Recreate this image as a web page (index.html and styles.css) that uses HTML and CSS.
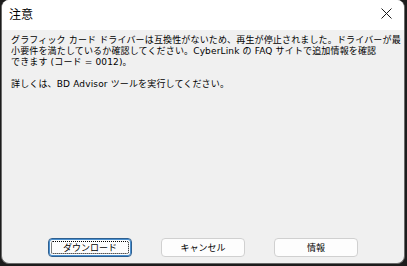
FILE: index.html
```html
<!DOCTYPE html>
<html lang="ja">
<head>
<meta charset="utf-8">
<link rel="stylesheet" href="styles.css">
</head>
<body>
<div class="window">
  <div class="titlebar">
    <span class="title">注意</span>
    <span class="close">
      <svg width="11" height="11" viewBox="0 0 11 11"><path d="M0.5 0.5 L10.5 10.5 M10.5 0.5 L0.5 10.5" stroke="#1a1a1a" stroke-width="1"/></svg>
    </span>
  </div>
  <div class="content">
    <p class="msg"><span class="line">グラフィック カード ドライバーは互換性がないため、再生が停止されました。ドライバーが最</span><span class="line">小要件を満たしているか確認してください。CyberLink の FAQ サイトで追加情報を確認</span><span class="line">できます (コード = 0012)。</span></p>
    <p class="msg"><span class="line">詳しくは、BD Advisor ツールを実行してください。</span></p>
  </div>
  <div class="buttons">
    <button class="btn default"><span class="focus">ダウンロード</span></button>
    <button class="btn">キャンセル</button>
    <button class="btn">情報</button>
  </div>
</div>
</body>
</html>
```
FILE: styles.css
```css
html, body {
  margin: 0;
  padding: 0;
  background: #1c1c1c;
  width: 407px;
  height: 266px;
  overflow: hidden;
}
body {
  padding: 0 2px 2px 1px;
  box-sizing: border-box;
  font-family: "Noto Sans CJK JP", "Noto Sans", sans-serif;
  color: #000;
}
.window {
  width: 404px;
  height: 264px;
  background: #f0f0f0;
  border-radius: 8px;
  overflow: hidden;
  display: flex;
  flex-direction: column;
  box-sizing: border-box;
  border: 1px solid #6a6a6a;
  border-top: none;
}
.titlebar {
  height: 30px;
  background: #ffffff;
  display: flex;
  align-items: center;
  justify-content: space-between;
  padding: 0 12px 2px 7px;
  box-sizing: border-box;
  flex: none;
}
.title {
  font-size: 12px;
  line-height: 14px;
}
.close {
  display: flex;
  margin-top: -2px;
}
.content {
  flex: 1;
  padding: 5px 9px 0 9px;
}
.msg {
  margin: 0 0 11px 0;
  font-family: "DejaVu Sans", "Noto Sans CJK JP", sans-serif;
  font-size: 9px;
  line-height: 11px;
  letter-spacing: 0.15px;
}
.line {
  display: block;
  white-space: nowrap;
}
.buttons {
  display: flex;
  justify-content: center;
  gap: 29px;
  padding: 0 0 6px 0;
  flex: none;
}
.btn {
  width: 84px;
  height: 19px;
  background: #fdfdfd;
  border: 1px solid #d0d0d0;
  border-radius: 4px;
  font-family: "Noto Sans CJK JP", sans-serif;
  font-size: 9px;
  color: #000;
  padding: 0;
  display: flex;
  align-items: center;
  justify-content: center;
}
.btn.default {
  border: 1px solid #2f5f8f;
  box-shadow: inset 0 0 0 1px #4a90d0;
  padding: 2px;
}
.focus {
  display: flex;
  align-items: center;
  justify-content: center;
  width: 100%;
  height: 100%;
  border: 1px dotted #000;
  border-radius: 2px;
  box-sizing: border-box;
}
```
